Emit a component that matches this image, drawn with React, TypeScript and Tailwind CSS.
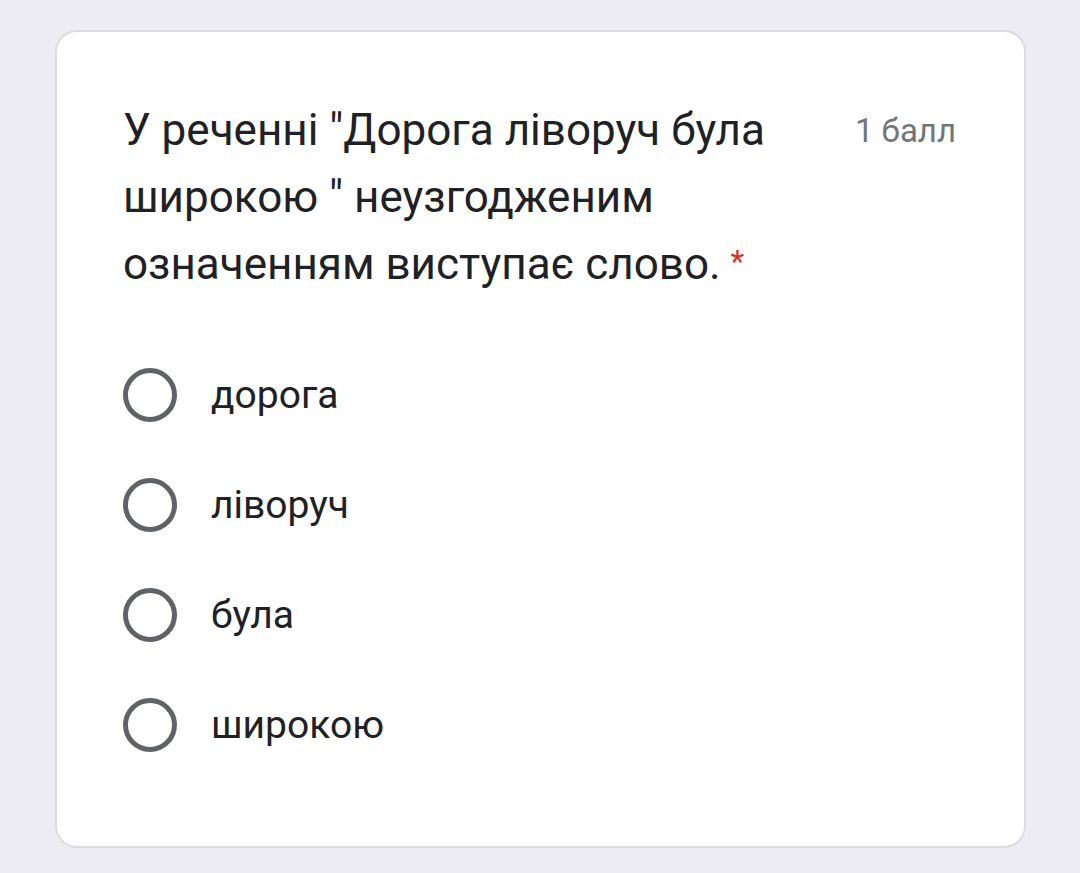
import React from "react";

const options = ["дорога", "ліворуч", "була", "широкою"];

export default function App() {
  return (
    <div className="w-[1080px] h-[873px] bg-[#edecf2] pt-[30px] pl-[55px]" style={{ fontFamily: "Roboto, 'Noto Sans', sans-serif" }}>
      <div className="w-[971px] h-[818px] bg-white rounded-[22px] border-[2px] border-[#dcdbe0] pl-[66px] pr-[68px] pt-[65px]">
        <div className="flex justify-between">
          <div className="w-[700px] text-[44px] leading-[67px] text-[#202124]">
            У реченні "Дорога ліворуч була широкою " неузгодженим означенням виступає слово.
            <span className="inline-block align-top text-[#d93025] ml-[10px] mt-[14px] text-[32px] leading-[32px]">*</span>
          </div>
          <div className="text-[33px] leading-[67px] text-[#70757a]">1 балл</div>
        </div>
        <div className="mt-[42px] flex flex-col">
          {options.map((o) => (
            <div key={o} className="flex items-center h-[110px]">
              <div className="w-[54px] h-[54px] rounded-full border-[5px] border-[#5f6368] shrink-0" />
              <div className="ml-[34px] text-[39px] text-[#202124]">{o}</div>
            </div>
          ))}
        </div>
      </div>
    </div>
  );
}
